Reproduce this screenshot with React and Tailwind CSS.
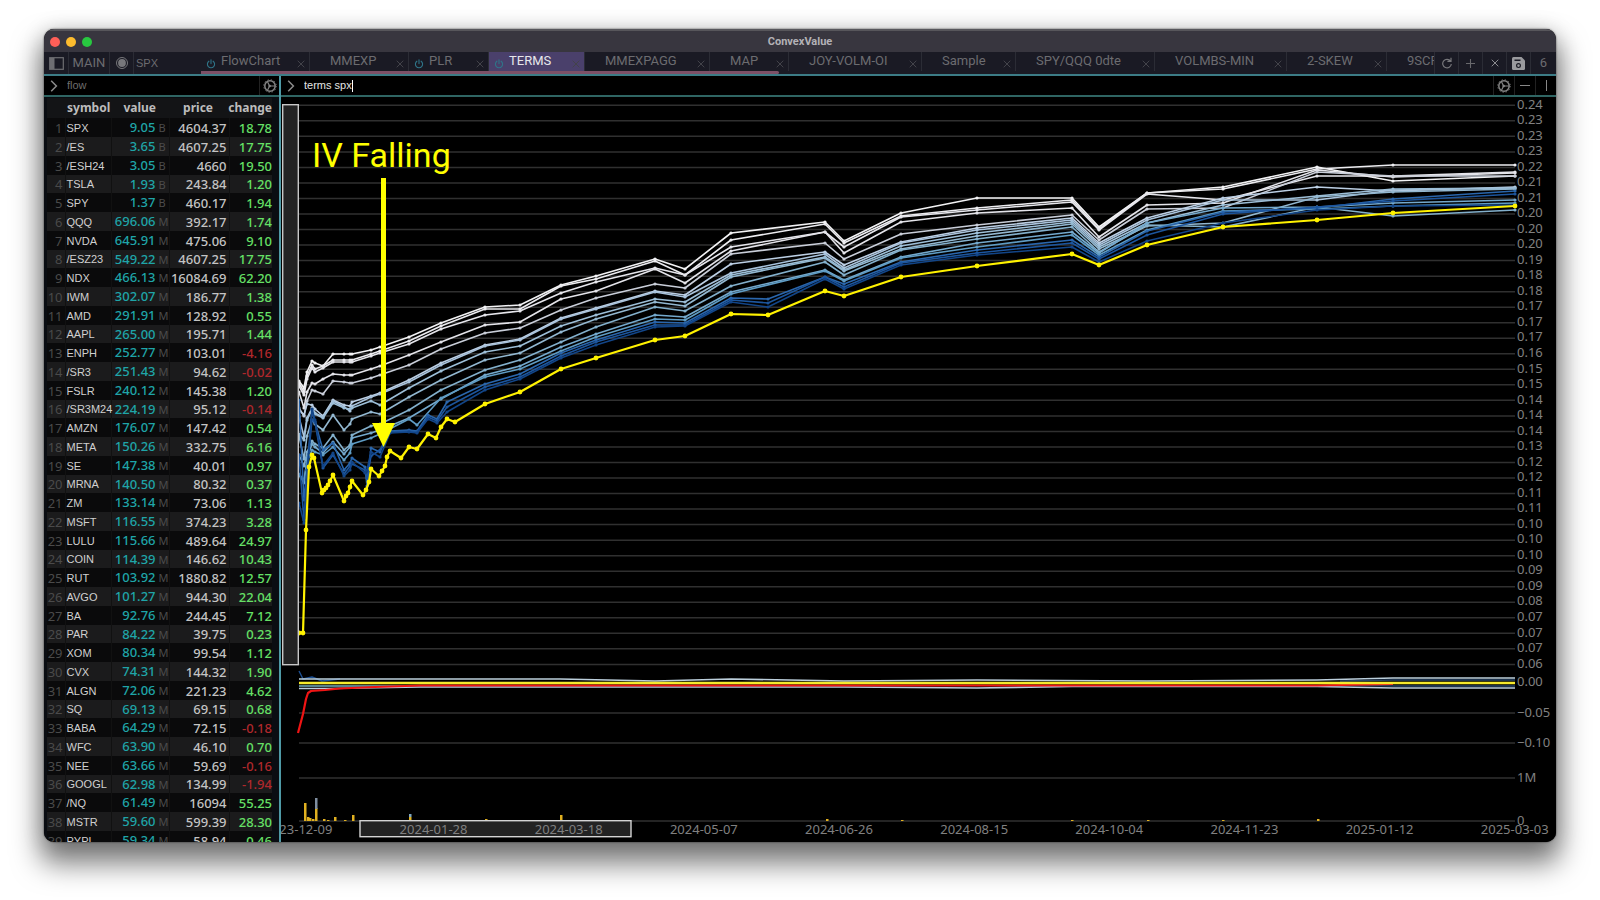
import React from "react";

const FLOW = `SPX|9.05 B|4604.37|18.78
/ES|3.65 B|4607.25|17.75
/ESH24|3.05 B|4660|19.50
TSLA|1.93 B|243.84|1.20
SPY|1.37 B|460.17|1.94
QQQ|696.06 M|392.17|1.74
NVDA|645.91 M|475.06|9.10
/ESZ23|549.22 M|4607.25|17.75
NDX|466.13 M|16084.69|62.20
IWM|302.07 M|186.77|1.38
AMD|291.91 M|128.92|0.55
AAPL|265.00 M|195.71|1.44
ENPH|252.77 M|103.01|-4.16
/SR3|251.43 M|94.62|-0.02
FSLR|240.12 M|145.38|1.20
/SR3M24|224.19 M|95.12|-0.14
AMZN|176.07 M|147.42|0.54
META|150.26 M|332.75|6.16
SE|147.38 M|40.01|0.97
MRNA|140.50 M|80.32|0.37
ZM|133.14 M|73.06|1.13
MSFT|116.55 M|374.23|3.28
LULU|115.66 M|489.64|24.97
COIN|114.39 M|146.62|10.43
RUT|103.92 M|1880.82|12.57
AVGO|101.27 M|944.30|22.04
BA|92.76 M|244.45|7.12
PAR|84.22 M|39.75|0.23
XOM|80.34 M|99.54|1.12
CVX|74.31 M|144.32|1.90
ALGN|72.06 M|221.23|4.62
SQ|69.13 M|69.15|0.68
BABA|64.29 M|72.15|-0.18
WFC|63.90 M|46.10|0.70
NEE|63.66 M|59.69|-0.16
GOOGL|62.98 M|134.99|-1.94
/NQ|61.49 M|16094|55.25
MSTR|59.60 M|599.39|28.30
PYPL|59.34 M|58.94|0.46`
  .split("\n")
  .map((line) => {
    const [symbol, value, price, change] = line.split("|");
    const [amount, unit] = value.split(" ");
    return { symbol, amount, unit, price, change };
  });

const TABS = [
  { name: "FlowChart", width: "w-[109px]", power: true },
  { name: "MMEXP", width: "w-[99px]" },
  { name: "PLR", width: "w-[80px]", power: true },
  { name: "TERMS", width: "w-[96px]", power: true, active: true },
  { name: "MMEXPAGG", width: "w-[125px]" },
  { name: "MAP", width: "w-[79px]" },
  { name: "JOY-VOLM-OI", width: "w-[133px]" },
  { name: "Sample", width: "w-[94px]" },
  { name: "SPY/QQQ 0dte", width: "w-[139px]" },
  { name: "VOLMBS-MIN", width: "w-[132px]" },
  { name: "2-SKEW", width: "w-[100px]" },
  { name: "9SCREEN", width: "w-[110px]" },
];

/* ---------- icons ---------- */

const Icon = ({ className, children, box = 16 }) => (
  <svg className={className} viewBox={`0 0 ${box} ${box}`} fill="none" stroke="currentColor" aria-hidden="true">
    {children}
  </svg>
);

const PowerIcon = () => (
  <Icon className="size-[10px] text-[#2f7488]" box={10}>
    <path d="M5 .8V4.6M2.9 2.2A3.6 3.6 0 1 0 7.1 2.2" strokeWidth="1.1" strokeLinecap="round" />
  </Icon>
);

const CrossIcon = ({ className }) => (
  <Icon className={className} box={8}>
    <path d="M.7.7 7.3 7.3M7.3.7.7 7.3" strokeWidth="1" />
  </Icon>
);

const ChevronIcon = () => (
  <Icon className="size-3 shrink-0 text-[#8c8c8c]" box={12}>
    <path d="M2.200.8 7.400 6 2.200 11.200" strokeWidth="1.5" />
  </Icon>
);

const GearIcon = () => (
  <Icon className="size-[14px] text-[#858585]" box={14}>
    <circle cx="7" cy="7" r="5.2" strokeWidth="1.5" />
    <circle cx="7" cy="7" r="6.3" strokeWidth=".9" strokeDasharray="1.3 2" />
    <path d="M7.4 7H12M6.6 7 4.6 3M6.6 7 4.6 11" strokeWidth="1.2" />
    <circle cx="6.7" cy="7" r="1.3" fill="currentColor" stroke="none" />
  </Icon>
);

/* ---------- chart data ---------- */

const STRIKE_COLORS = [
  "#f2f2f4", "#ececf0", "#e6e6ec", "#e4e4ea", "#c9ced9", "#bccfe4", "#a9c3dc", "#9dbfd8",
  "#93b8d1", "#83b0cc", "#74a9cd", "#5f9cc4", "#2a66ac", "#1c559d", "#124588",
];

const NEAR_X = [299, 304, 307, 312, 315, 323, 333, 344, 350, 352, 371, 380, 409, 441];
const NEAR_Y = [
  [381, 388, 372, 361, 363, 366, 354, 354, 354, 354, 350, 347, 337, 323],
  [383, 392, 376, 365, 369, 366, 360, 360, 360, 360, 354, 351, 341, 326],
  [386, 395, 379, 368, 372, 368, 362, 362, 362, 362, 356, 353, 344, 329],
  [392, 408, 392, 383, 384, 379, 374, 375, 375, 375, 369, 366, 355, 342],
  [408, 416, 401, 390, 391, 394, 381, 382, 383, 383, 378, 375, 365, 349],
  [410, 415, 404, 405, 409, 416, 400, 405, 406, 402, 396, 393, 380, 363],
  [417, 437, 418, 408, 413, 417, 401, 407, 411, 406, 397, 394, 382, 365],
  [434, 440, 420, 410, 414, 418, 403, 408, 409, 408, 401, 405, 388, 371],
  [436, 459, 436, 420, 424, 430, 415, 430, 424, 419, 412, 414, 397, 380],
  [455, 466, 452, 441, 444, 448, 435, 450, 445, 435, 426, 424, 410, 390],
  [475, 483, 458, 444, 447, 453, 442, 454, 447, 438, 433, 430, 418, 399],
  [474, 480, 462, 450, 452, 455, 447, 460, 453, 444, 438, 434, 419, 398],
  [400, 500, 470, 410, 422, 450, 443, 470, 463, 458, 448, 452, 429, 405],
  [455, 520, 470, 420, 422, 468, 455, 474, 466, 464, 456, 450, 431, 410],
  [503, 523, 480, 409, 420, 466, 453, 476, 470, 462, 452, 457, 432, 418],
];

const FAR_X = [485, 520, 561, 596, 655, 685, 731, 825, 844, 901, 977, 1072, 1099, 1147, 1223, 1317, 1393, 1515];
const FAR_Y = [
  [307, 305, 285, 276, 259, 269, 233, 222, 241, 213, 198, 198, 227, 193, 187, 167, 181, 176],
  [309, 309, 286, 279, 261, 275, 240, 224, 243, 216, 208, 200, 229, 193, 189, 169, 165, 165],
  [315, 311, 293, 282, 268, 275, 247, 232, 247, 217, 210, 202, 230, 194, 200, 176, 176, 172],
  [325, 322, 299, 291, 269, 283, 251, 232, 253, 222, 213, 208, 237, 205, 203, 170, 177, 173],
  [333, 328, 310, 298, 284, 288, 254, 243, 259, 234, 225, 215, 240, 209, 208, 172, 176, 176],
  [345, 339, 318, 308, 291, 295, 264, 252, 265, 242, 228, 218, 243, 218, 198, 187, 191, 187],
  [346, 340, 319, 309, 292, 297, 273, 254, 268, 243, 230, 220, 245, 220, 200, 200, 190, 188],
  [352, 346, 326, 315, 299, 302, 275, 257, 270, 246, 233, 222, 247, 223, 205, 196, 189, 188],
  [360, 353, 332, 319, 302, 306, 277, 258, 271, 249, 236, 224, 249, 226, 223, 197, 192, 189],
  [370, 360, 342, 327, 307, 311, 286, 262, 275, 250, 239, 227, 252, 225, 227, 207, 216, 210],
  [375, 366, 347, 334, 315, 317, 292, 270, 280, 257, 243, 232, 253, 223, 208, 207, 203, 200],
  [377, 369, 351, 337, 319, 320, 294, 271, 281, 258, 247, 235, 255, 230, 211, 209, 206, 203],
  [384, 374, 353, 340, 322, 323, 298, 277, 284, 262, 250, 240, 257, 231, 212, 208, 199, 191],
  [387, 377, 356, 342, 325, 325, 300, 277, 287, 263, 253, 243, 259, 235, 214, 207, 201, 194],
  [390, 379, 358, 345, 327, 326, 302, 279, 289, 265, 255, 247, 262, 241, 223, 210, 206, 205],
];

const DIP_Y = { 12: 299, 13: 303, 14: 307 };

const TERM_LINES = FAR_Y.map((far, i) => {
  const points = NEAR_X.map((x, k) => [x, NEAR_Y[i][k]]);
  if (i >= 12) {
    const n = i - 12;
    points.splice(10, 0, [365, 467 + n * 3], [367, 486 - n * 8]);
    points.splice(14, 2, [390, 431 + n], [409, 430 + n], [417, 431 + n], [428, 415 + n * 2], [437, 419 + n * 2], [447, 402 + n * 5]);
  }
  if (i === 11) points.splice(13, 0, [417, 425]);
  FAR_X.forEach((x, k) => {
    points.push([x, far[k]]);
    if (x === 731 && DIP_Y[i]) points.push([768, DIP_Y[i]]);
  });
  return points;
});

const FRONT_LINE = [
  [299, 633], [303, 633], [306, 530], [309, 467], [312, 455], [314, 458], [322, 493], [324, 490], [326, 488],
  [328, 485], [330, 481], [333, 475], [344, 501], [346, 496], [348, 493], [350, 487], [352, 481], [363, 495],
  [366, 490], [369, 482], [371, 469], [379, 476], [382, 471], [385, 466], [387, 457], [390, 451], [401, 458],
  [409, 447], [417, 449], [428, 434], [436, 438], [441, 427], [447, 419], [455, 422], [485, 404], [520, 392],
  [561, 369], [596, 358], [655, 340], [685, 336], [731, 314], [768, 315], [825, 291], [844, 296], [901, 277],
  [977, 266], [1072, 254], [1099, 265], [1147, 245], [1223, 227], [1317, 220], [1393, 213], [1515, 206],
];

const LEVELS = (
  "0.24 0.23 0.23 0.23 0.22 0.21 0.21 0.20 0.20 0.20 0.19 0.18 0.18 0.17 0.17 0.17 0.16 0.15 0.15 " +
  "0.14 0.14 0.14 0.13 0.12 0.12 0.11 0.11 0.10 0.10 0.10 0.09 0.09 0.08 0.07 0.07 0.07 0.06"
).split(" ");

const LOWER_LEVELS = [
  { label: "0.00", line: 683, text: 681 },
  { label: "−0.05", line: 713, text: 712 },
  { label: "−0.10", line: 743, text: 742 },
  { label: "1M", line: 778, text: 777 },
  { label: "0", line: 821, text: 820 },
];

const DATES = [
  "2023-12-09", "2024-01-28", "2024-03-18", "2024-05-07", "2024-06-26",
  "2024-08-15", "2024-10-04", "2024-11-23", "2025-01-12", "2025-03-03",
];

const VOLUME = [
  [305, 18], [308, 4], [310, 3], [313, 2], [316, 13], [324, 2], [328, 1], [335, 4], [345, 1], [353, 6],
  [410, 4], [486, 2], [519, 1], [561, 6], [827, 2], [902, 1], [1072, 1], [1148, 1], [1223, 1], [1318, 2],
];

const toPoints = (points) => points.map((p) => p.join(",")).join(" ");

const toMarks = (points, r) => points.map(([x, y]) => `M${x - r} ${y}a${r} ${r} 0 1 0 ${2 * r} 0a${r} ${r} 0 1 0 ${-2 * r} 0`).join("");

function TermChart() {
  return (
    <svg
      className="block h-full w-full font-['Noto_Sans',sans-serif]"
      viewBox="281 97 1275 745"
      role="img"
      aria-label="Implied volatility term structure of SPX"
    >
      <g stroke="#303030" strokeWidth="1.5">
        {LEVELS.map((_, i) => {
          const y = 105.3 + i * 15.53;
          return <line key={i} x1="299" x2="1515" y1={y} y2={y} />;
        })}
        {LOWER_LEVELS.map((l) => (
          <line key={l.label} x1="299" x2="1515" y1={l.line} y2={l.line} />
        ))}
      </g>

      {TERM_LINES.map((points, i) => (
        <g key={i}>
          <polyline points={toPoints(points)} fill="none" stroke={STRIKE_COLORS[i]} strokeWidth="1.6" strokeLinejoin="round" />
          <path d={toMarks(points, 1.6)} fill={STRIKE_COLORS[i]} />
        </g>
      ))}
      <polyline points={toPoints(FRONT_LINE)} fill="none" stroke="#fff200" strokeWidth="2.2" strokeLinejoin="round" />
      <path d={toMarks(FRONT_LINE, 2.4)} fill="#fff200" />

      <g fill="none" strokeLinejoin="round">
        <path d="M299 671 303 679 312 677 322 681 340 679" stroke="#1c4f92" strokeWidth="1.4" />
        <path d="M299 679H560L655 681 731 679 844 681 977 680 1147 681 1317 680 1393 678H1515" stroke="#bccfdc" strokeWidth="1.6" />
        <path d="M1340 681 1393 680H1515M1340 685 1393 686H1515" stroke="#274568" strokeWidth="1.6" />
        <path d="M299 686H410" stroke="#74aebc" strokeWidth="1.6" />
        <path d="M299 688.5H330L420 687 655 687 844 687 977 688 1072 686.500 1317 686.500 1393 688H1515" stroke="#b9cbdc" strokeWidth="1.6" />
        <path d="M298 733 303 714 306 699 308 693 311 691 325 690 340 688.5 375 687 420 685.500H1317L1393 684" stroke="#f01414" strokeWidth="2.200" />
        <path d="M299 683H1515" stroke="#f6ea2c" strokeWidth="2.4" />
      </g>

      {VOLUME.map(([x, h]) => (
        <rect key={x} x={x - 1} y={821 - h} width="2.500" height={h} fill="#e0b020" />
      ))}
      <rect x="315" y="798" width="2.500" height="11" fill="#7f8ea0" />
      <rect x="409" y="814" width="2.500" height="3" fill="#7fa8c0" />

      <rect x="282.7" y="104.7" width="15.6" height="560" fill="#232323" stroke="#c8c8c8" strokeWidth="1.4" />
      <rect x="360" y="820.7" width="271" height="16" fill="#232323" stroke="#d4d4d4" strokeWidth="1.4" />

      <g className="text-[13px]" fill="#808080">
        {LEVELS.map((label, i) => (
          <text key={i} x="1517" y={108.5 + i * 15.53}>
            {label}
          </text>
        ))}
        {LOWER_LEVELS.map((l) => (
          <text key={l.label} x="1517" y={l.text + 5}>
            {l.label}
          </text>
        ))}
        {DATES.map((date, i) => (
          <text key={date} x={298.4 + i * 135.15} y="834" textAnchor="middle">
            {date}
          </text>
        ))}
      </g>

      <g fill="#ffff00">
        <text x="312" y="167" className="font-[Roboto,sans-serif] text-[34px]">
          IV Falling
        </text>
        <rect x="381" y="178" width="5" height="247" />
        <path d="M372 423H395L383.500 447Z" />
      </g>
    </svg>
  );
}

/* ---------- window parts ---------- */

const toolCell = "flex w-6 shrink-0 items-center justify-center border-l border-[#2b2c35]";

function TabBar() {
  return (
    <nav className="flex h-[24px] shrink-0 border-b-2 border-[#3c7c86] bg-[#1a1a24] font-[Roboto,sans-serif] text-[13px] text-[#6c6c70]">
      <button type="button" aria-label="Toggle sidebar" className="flex w-6 shrink-0 items-center justify-center">
        <Icon className="size-[15px] text-[#6e6e72]" box={15}>
          <rect x=".7" y="1.700" width="13.600" height="11.600" strokeWidth="1.2" />
          <rect x="1" y="2" width="4.500" height="11" fill="currentColor" stroke="none" />
        </Icon>
      </button>
      <button type="button" className="w-[41px] shrink-0 border-l border-[#2b2c35]">
        MAIN
      </button>
      <button type="button" aria-label="Link group" className={toolCell}>
        <Icon className="size-3 text-[#77777b]" box={12}>
          <circle cx="6" cy="6" r="5.500" strokeWidth="1" />
          <circle cx="6" cy="6" r="3.900" fill="currentColor" stroke="none" />
        </Icon>
      </button>
      <button
        type="button"
        className="w-[68px] shrink-0 border-l border-[#2b2c35] pl-0.5 text-left font-['Liberation_Sans',sans-serif] text-[11px]"
      >
        SPX
      </button>
      <div className="flex min-w-0 flex-1 flex-col overflow-hidden">
        <div className="flex h-[19px]">
          {TABS.map((tab) => (
            <div
              key={tab.name}
              className={`${tab.width} flex shrink-0 items-center border-r border-[#2b2c35] pr-1 ${
                tab.active ? "bg-[#4a406b] text-[#e6e6ea]" : ""
              }`}
            >
              <span className="flex w-5 shrink-0 justify-center pt-1">{tab.power && <PowerIcon />}</span>
              <button type="button" className="pb-px leading-4 whitespace-nowrap">
                {tab.name}
              </button>
              <button type="button" aria-label={`Close ${tab.name}`} className="ml-auto pt-1">
                <CrossIcon className="size-2 text-[#43434a]" />
              </button>
            </div>
          ))}
        </div>
        <div className="h-[3px] w-[578px] rounded-r-sm bg-[#7d5067]" />
      </div>
      <button type="button" aria-label="Reload" className={toolCell}>
        <Icon className="size-3 text-[#77777b]" box={12}>
          <path d="M9.600 4.200A4.300 4.300 0 1 0 10.300 7M10 .8V4.400H6.400" strokeWidth="1.2" />
        </Icon>
      </button>
      <button type="button" aria-label="Add tab" className={toolCell}>
        <Icon className="size-[9px] text-[#68686c]" box={9}>
          <path d="M4.500 0V9M0 4.500H9" strokeWidth="1.1" />
        </Icon>
      </button>
      <button type="button" aria-label="Close window" className={toolCell}>
        <CrossIcon className="size-2 text-[#8c8c90]" />
      </button>
      <button type="button" aria-label="Save" className={toolCell}>
        <Icon className="size-[13px] text-[#9a9a9e]" box={13}>
          <path d="M1.500 0H9.500L13 3.500V11.500Q13 13 11.500 13H1.500Q0 13 0 11.500V1.500Q0 0 1.500 0Z" fill="currentColor" stroke="none" />
          <path d="M2.500 3.200H8.500" stroke="#1a1a24" strokeWidth="1.6" />
          <circle cx="6.500" cy="8.600" r="1.900" stroke="#1a1a24" strokeWidth="1.2" />
        </Icon>
      </button>
      <button type="button" className="w-[26px] shrink-0 border-l border-[#2b2c35]">
        6
      </button>
    </nav>
  );
}

const commandBar =
  "flex h-[21px] shrink-0 items-center border-b-2 border-[#2f6563] bg-black pl-[5px] font-['Liberation_Sans',sans-serif] text-[11px]";

function FlowPanel() {
  return (
    <section className="flex w-[237px] shrink-0 flex-col border-r-2 border-[#4f9aa6] bg-[#0a0d12]">
      <div className={commandBar}>
        <ChevronIcon />
        <input
          aria-label="Flow command"
          defaultValue="flow"
          className="ml-1.5 min-w-0 flex-1 bg-transparent text-[#6d6d6d] outline-none"
        />
        <button type="button" aria-label="Flow settings" className="flex h-full w-5 items-center justify-center border-l border-[#222]">
          <GearIcon />
        </button>
      </div>
      <div className="min-h-0 flex-1 overflow-hidden px-[3px] pt-px">
        <table className="w-[225px] table-fixed border-collapse font-['Noto_Sans',sans-serif] text-[13px] leading-4">
          <colgroup>
            <col className="w-[18px]" />
            <col className="w-[46px]" />
            <col className="w-[58px]" />
            <col className="w-[60px]" />
            <col className="w-[43px]" />
          </colgroup>
          <thead>
            <tr className="h-5 bg-[#131416] text-[12px] text-[#bcbcbc]">
              <th aria-label="rank" />
              <th className="pl-0.5 text-left">symbol</th>
              <th className="pr-[13px] text-right">value</th>
              <th className="pr-4 text-right">price</th>
              <th className="text-right">
                <span className="-ml-2">change</span>
              </th>
            </tr>
          </thead>
          <tbody>
            {FLOW.map((row, i) => (
              <tr key={row.symbol} className="h-[19px] odd:bg-[#0a0a0b] even:bg-[#1b1b1c] [&:nth-child(4n)]:h-[18px]">
                <td className="pr-0.5 text-right text-[#4a4a4a]">{i + 1}</td>
                <td className="border-l border-[#111] pl-px font-['Liberation_Sans',sans-serif] text-[11px] whitespace-nowrap text-[#d0d0d0]">
                  {row.symbol}
                </td>
                <td className="border-l border-[#111] pr-0.5 text-right font-medium whitespace-nowrap text-[#1fa5a8]">
                  {row.amount}
                  <span className="ml-[3px] inline-block w-2 text-left text-[11px] font-normal text-[#4c4c4c]">{row.unit}</span>
                </td>
                <td className="border-l border-[#111] pr-0.5 text-right font-medium text-[#c4c4c4]">{row.price}</td>
                <td
                  className={`border-l border-[#111] text-right font-medium ${
                    row.change.startsWith("-") ? "text-[#b0282c]" : "text-[#66e066]"
                  }`}
                >
                  {row.change}
                </td>
              </tr>
            ))}
          </tbody>
        </table>
      </div>
    </section>
  );
}

function TermsPanel() {
  const cell = "flex h-full w-[21px] items-center justify-center border-l border-[#222]";
  return (
    <section className="flex min-w-0 flex-1 flex-col bg-black">
      <div className={commandBar}>
        <ChevronIcon />
        <div className="ml-1.5 flex flex-1 items-center">
          <input aria-label="Terms command" defaultValue="terms spx" className="field-sizing-content bg-transparent text-[#e4e4e4] outline-none" />
          <span className="h-3 w-px bg-white" />
        </div>
        <button type="button" aria-label="Terms settings" className={cell}>
          <GearIcon />
        </button>
        <button type="button" aria-label="Split horizontally" className={cell}>
          <span className="h-px w-[10px] bg-[#888]" />
        </button>
        <button type="button" aria-label="Split vertically" className={cell}>
          <span className="h-[11px] w-px bg-[#888]" />
        </button>
      </div>
      <div className="min-h-0 flex-1">
        <TermChart />
      </div>
    </section>
  );
}

export default function App() {
  return (
    <main className="flex h-screen flex-col bg-white px-11 pt-[29px] pb-[58px]">
      <div className="flex min-h-0 flex-1 flex-col overflow-hidden rounded-[10px] bg-black shadow-[0_0_2px_rgba(0,0,0,0.7),0_18px_28px_4px_rgba(0,0,0,0.5),0_2px_22px_rgba(0,0,0,0.18)]">
        <header className="flex h-[23px] shrink-0 items-center border-t-2 border-[#57565b] bg-[#38363f] px-1.5">
          <div className="flex flex-1 gap-1.5">
            <button type="button" aria-label="Close" className="size-[10px] rounded-full bg-[#fe5f58]" />
            <button type="button" aria-label="Minimize" className="size-[10px] rounded-full bg-[#fdbc2e]" />
            <button type="button" aria-label="Zoom" className="size-[10px] rounded-full bg-[#28c840]" />
          </div>
          <h1 className="font-[Roboto,sans-serif] text-[11px] leading-4 font-bold text-[#b3b2b6]">ConvexValue</h1>
          <div className="flex-1" />
        </header>
        <TabBar />
        <div className="flex min-h-0 flex-1">
          <FlowPanel />
          <TermsPanel />
        </div>
      </div>
    </main>
  );
}
